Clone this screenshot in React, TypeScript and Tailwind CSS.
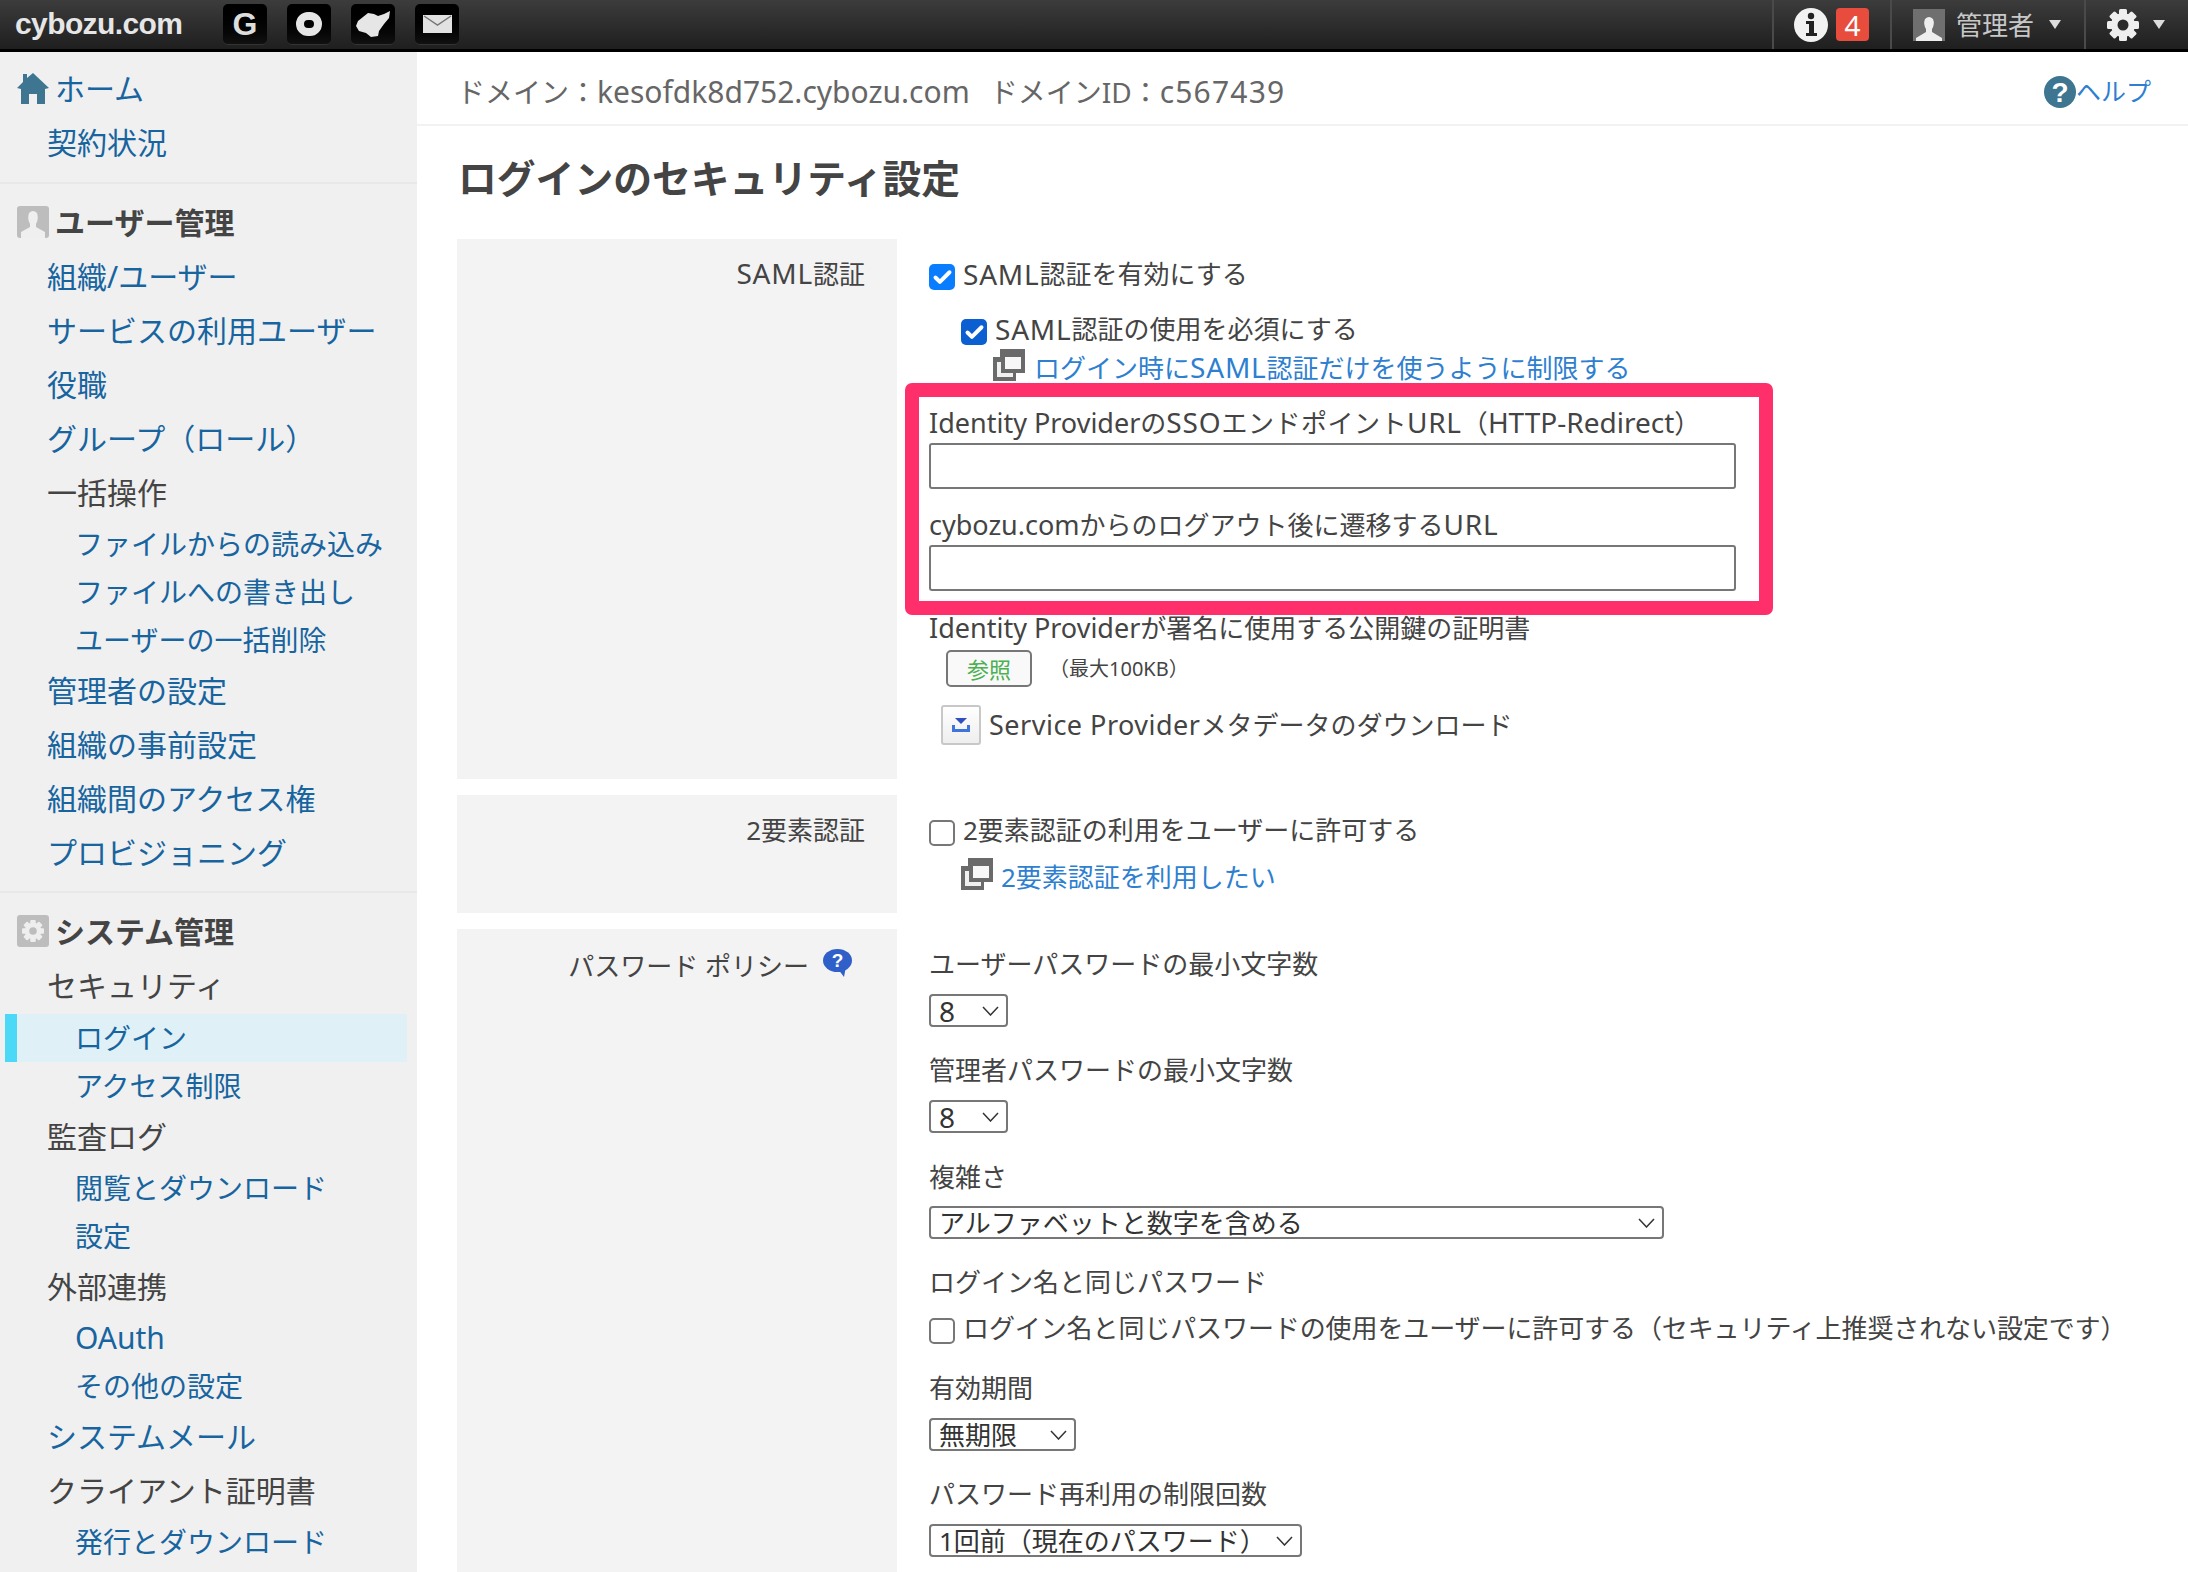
import { Check } from "lucide-react";

function AppIcon({ children }: { children: React.ReactNode }) {
  return (
    <div className="flex h-[41px] w-[44px] items-center justify-center rounded-[5px] border-b border-[#333] bg-gradient-to-b from-[#000] to-[#111]">
      {children}
    </div>
  );
}

function Caret() {
  return <div className="h-0 w-0 border-x-[6px] border-t-[9px] border-x-transparent border-t-[#ddd]" />;
}

// latin runs are a bit wider in the original than in Noto Sans
function Caps({ children }: { children: React.ReactNode }) {
  return <span className="text-[28px] leading-none tracking-[0.8px]">{children}</span>;
}

function Lat({ children }: { children: React.ReactNode }) {
  return <span className="text-[27px] leading-none">{children}</span>;
}

function Gear({ hole }: { hole: string }) {
  return (
    <>
      <g fill="#eee">
        <rect x="12" y="0" width="8" height="32" rx="1.5" />
        <rect x="12" y="0" width="8" height="32" rx="1.5" transform="rotate(45 16 16)" />
        <rect x="12" y="0" width="8" height="32" rx="1.5" transform="rotate(90 16 16)" />
        <rect x="12" y="0" width="8" height="32" rx="1.5" transform="rotate(135 16 16)" />
        <circle cx="16" cy="16" r="12" />
      </g>
      <circle cx="16" cy="16" r="5.5" fill={hole} />
    </>
  );
}

function Header() {
  return (
    <header className="flex h-[52px] shrink-0 items-stretch border-b-[3px] border-black bg-gradient-to-b from-[#3c3c3c] to-[#1f1f1f]">
      <div className="w-[223px] pl-[15px] font-['Liberation_Sans',sans-serif] text-[30px] leading-[48px] font-bold tracking-[-0.6px] text-[#e6e6e6]">
        cybozu.com
      </div>
      <div className="flex items-start gap-5 pt-1">
        <AppIcon>
          <span className="font-['Liberation_Sans',sans-serif] text-[32px] leading-none font-bold text-[#ddd]">G</span>
        </AppIcon>
        <AppIcon>
          <div className="h-[24px] w-[26px] rounded-full border-[8px] border-[#e6e6e6]" />
        </AppIcon>
        <AppIcon>
          <svg width="34" height="26" viewBox="0 0 34 26">
            <path
              d="M34 0 L28 3 L22 5 L18 3 L12 2 L7 6 L2 10 L0 15 L3 20 L10 22 L15 26 L22 25 L23 20 L28 13 L33 7 Z"
              fill="#e6e6e6"
            />
          </svg>
        </AppIcon>
        <AppIcon>
          <svg width="29" height="18" viewBox="0 0 29 18">
            <rect width="29" height="18" fill="#e2e2e2" />
            <path d="M1 1 L14.5 10 L28 1" fill="none" stroke="#777" strokeWidth="1.5" />
          </svg>
        </AppIcon>
      </div>
      <div className="ml-auto flex items-stretch">
        <div className="flex w-[118px] items-center border-l-[2px] border-[#4a4a4a] pl-[20px]">
          <svg width="34" height="34" viewBox="0 0 34 34">
            <circle cx="17" cy="17" r="17" fill="#f2f2f2" />
            <circle cx="17" cy="8" r="3.2" fill="#222" />
            <path d="M12 13 H20 V25 H23 V28 H12 V25 H15 V16 H12 Z" fill="#222" />
          </svg>
          <div className="ml-[8px] flex h-[33px] w-[33px] items-center justify-center rounded-[4px] bg-[#e74c3c] text-[28px] leading-none text-white">
            4
          </div>
        </div>
        <div className="flex w-[194px] items-center border-l-[2px] border-[#4a4a4a] pl-[21px]">
          <div className="flex h-[32px] w-[32px] items-end justify-center overflow-hidden bg-[#6f6f6f]">
            <svg width="26" height="26" viewBox="0 0 26 26">
              <path d="M9 4 Q13 0 17 4 Q19 9 16 14 L16 17 L26 23 L26 26 L0 26 L0 23 L10 17 L10 14 Q7 9 9 4 Z" fill="#eee" />
            </svg>
          </div>
          <span className="ml-[11px] text-[26px] leading-none text-[#c8c8c8]">管理者</span>
          <div className="ml-[15px]">
            <Caret />
          </div>
        </div>
        <div className="flex w-[104px] items-center border-l-[2px] border-[#4a4a4a] pl-[21px]">
          <svg width="32" height="32" viewBox="0 0 32 32">
            <Gear hole="#2a2a2a" />
          </svg>
          <div className="ml-[14px]">
            <Caret />
          </div>
        </div>
      </div>
    </header>
  );
}

function NavTop({ children, dark }: { children: React.ReactNode; dark?: boolean }) {
  return (
    <div className={`flex h-[54px] items-center pl-[47px] text-[30px] ${dark ? "text-[#444]" : "text-[#17649f]"}`}>
      {children}
    </div>
  );
}

function NavSub({ children }: { children: React.ReactNode }) {
  return <div className="flex h-[48px] items-center pt-[2px] pl-[75px] text-[28px] text-[#17649f]">{children}</div>;
}

function NavHead({ icon, children }: { icon: React.ReactNode; children: React.ReactNode }) {
  return (
    <div className="flex h-[54px] items-center pl-[17px] text-[30px] font-bold text-[#444]">
      <div className="mr-[6px] flex h-[32px] w-[32px] items-center justify-center overflow-hidden rounded-[3px] bg-[#bdbdbd]">
        {icon}
      </div>
      {children}
    </div>
  );
}

function Sidebar() {
  return (
    <aside className="w-[417px] shrink-0 bg-[#f0f0f0] pt-[9px]">
      <div className="flex h-[54px] items-center pl-[17px] text-[30px] text-[#17649f]">
        <svg className="mr-[6px]" width="32" height="31" viewBox="0 0 32 31">
          <path
            d="M16 0 L32 15 L28 16 L28 31 L20 31 L20 21 L12 21 L12 31 L4 31 L4 16 L0 15 L6 9 L6 1 L10 1 L10 5 Z"
            fill="#3e7590"
          />
        </svg>
        ホーム
      </div>
      <NavTop>契約状況</NavTop>
      <div className="mt-[13px] mb-[11px] h-[2px] bg-[#e8e8e8]" />

      <NavHead
        icon={
          <svg width="24" height="28" viewBox="0 0 24 28" className="mt-[4px]">
            <path d="M8 3 Q12 -1 16 3 Q18 9 15 14 L15 17 L24 22 L24 28 L0 28 L0 22 L9 17 L9 14 Q6 9 8 3 Z" fill="#efefef" />
          </svg>
        }
      >
        ユーザー管理
      </NavHead>
      <NavTop>組織/ユーザー</NavTop>
      <NavTop>サービスの利用ユーザー</NavTop>
      <NavTop>役職</NavTop>
      <NavTop>グループ（ロール）</NavTop>
      <NavTop dark>一括操作</NavTop>
      <NavSub>ファイルからの読み込み</NavSub>
      <NavSub>ファイルへの書き出し</NavSub>
      <NavSub>ユーザーの一括削除</NavSub>
      <NavTop>管理者の設定</NavTop>
      <NavTop>組織の事前設定</NavTop>
      <NavTop>組織間のアクセス権</NavTop>
      <NavTop>プロビジョニング</NavTop>
      <div className="mt-[12px] mb-[11px] h-[2px] bg-[#e8e8e8]" />

      <NavHead
        icon={
          <svg width="22" height="22" viewBox="0 0 32 32">
            <Gear hole="#bdbdbd" />
          </svg>
        }
      >
        システム管理
      </NavHead>
      <NavTop dark>セキュリティ</NavTop>
      <div className="mt-[2px] ml-[5px] flex h-[48px] w-[402px] items-center border-l-[12px] border-[#4cd9f7] bg-[#dff1f6] pl-[58px] text-[28px] text-[#17649f]">
        ログイン
      </div>
      <div className="flex h-[47px] items-center pl-[75px] text-[28px] text-[#17649f]">アクセス制限</div>
      <NavTop dark>監査ログ</NavTop>
      <NavSub>閲覧とダウンロード</NavSub>
      <NavSub>設定</NavSub>
      <NavTop dark>外部連携</NavTop>
      <NavSub>
        <span className="text-[30px] leading-none">OAuth</span>
      </NavSub>
      <NavSub>その他の設定</NavSub>
      <NavTop>システムメール</NavTop>
      <NavTop dark>クライアント証明書</NavTop>
      <NavSub>発行とダウンロード</NavSub>
    </aside>
  );
}

function Line({ children, className = "" }: { children: React.ReactNode; className?: string }) {
  return <div className={`flex h-[36px] items-center text-[26px] text-[#444] ${className}`}>{children}</div>;
}

function CheckBox({ checked, color = "bg-[#0a7dff]" }: { checked?: boolean; color?: string }) {
  if (!checked) {
    return <div className="mt-[6px] mr-[8px] h-[26px] w-[26px] shrink-0 rounded-[5px] border-[2px] border-[#777] bg-white" />;
  }
  return (
    <div className={`mt-[6px] mr-[8px] flex h-[26px] w-[26px] shrink-0 items-center justify-center rounded-[5px] ${color}`}>
      <Check size={21} strokeWidth={4.5} color="#fff" />
    </div>
  );
}

function LinkIcon() {
  return (
    <svg className="shrink-0" width="32" height="32" viewBox="0 0 32 32">
      <rect x="7" y="0" width="25" height="24" fill="#6a6a6a" />
      <rect x="0" y="8" width="23" height="24" fill="#6a6a6a" />
      <rect x="4" y="13" width="16" height="15" fill="#f0f0f0" />
      <rect x="8" y="6" width="24" height="18" fill="#6a6a6a" />
      <rect x="12" y="8" width="16" height="12" fill="#f7f7f7" />
    </svg>
  );
}

function Select({ value, className, textClass = "text-[26px]" }: { value: string; className: string; textClass?: string }) {
  return (
    <div className={`flex h-[33px] items-center justify-between rounded-[4px] border-[2px] border-[#777] bg-white pr-[7px] pl-[8px] leading-none text-[#333] ${textClass} ${className}`}>
      <span>{value}</span>
      <svg width="17" height="10" viewBox="0 0 17 10">
        <path d="M1 1 L8.5 9 L16 1" fill="none" stroke="#333" strokeWidth="1.5" />
      </svg>
    </div>
  );
}

function TextBox({ className = "" }: { className?: string }) {
  return <div className={`h-[46px] w-[807px] rounded-[3px] border-[2px] border-[#777] bg-white ${className}`} />;
}

function Content() {
  return (
    <main className="flex min-w-0 flex-1 flex-col overflow-hidden">
      <div className="flex h-[74px] shrink-0 items-center border-b-[2px] border-[#f2f2f2] pt-[7px] pr-[37px] pl-[40px] text-[#666]">
        <span className="text-[28px]">
          ドメイン：<span className="text-[30px] leading-none">kesofdk8d752.cybozu.com</span>
        </span>
        <span className="ml-[20px] text-[28px]">
          ドメインID：<span className="text-[30px] leading-none tracking-[1.2px]">c567439</span>
        </span>
        <div className="ml-auto flex items-center text-[25px] text-[#2f7fd0]">
          <svg width="32" height="32" viewBox="0 0 32 32">
            <circle cx="16" cy="16" r="16" fill="#3e7590" />
            <text x="16" y="26" textAnchor="middle" fontSize="28" fontWeight="700" fill="#fff" fontFamily="Liberation Sans">?</text>
          </svg>
          ヘルプ
        </div>
      </div>

      <h1 className="mt-[26px] ml-[41px] h-[52px] shrink-0 text-[38.8px] leading-[52px] font-bold text-[#444]">
        ログインのセキュリティ設定
      </h1>

      <div className="mt-[35px] flex h-[540px] shrink-0 pl-[40px]">
        <div className="w-[440px] shrink-0 bg-[#f3f3f3] pt-[17px] pr-[32px] text-right">
          <div className="h-[36px] text-[26px] leading-[36px] text-[#444]">
            <Caps>SAML</Caps>認証
          </div>
        </div>
        <div className="pt-[17px] pl-[32px]">
          <Line>
            <CheckBox checked />
            <Caps>SAML</Caps>認証を有効にする
          </Line>
          <Line className="mt-[19px] ml-[32px]">
            <CheckBox checked color="bg-[#0b5fd1]" />
            <Caps>SAML</Caps>認証の使用を必須にする
          </Line>
          <div className="mt-[2px] ml-[64px] flex h-[32px]">
            <LinkIcon />
            <span className="mt-[3px] ml-[9px] text-[26px] leading-[32px] text-[#2f7fd0]">
              ログイン時に<Caps>SAML</Caps>認証だけを使うように制限する
            </span>
          </div>
          <div className="relative mt-[24px]">
            <div className="absolute top-[-22px] left-[-24px] h-[232px] w-[868px] rounded-[7px] border-[14px] border-[#ff2f6b]" />
            <Line>
              <span>
                <Lat>Identity Provider</Lat>の<Caps>SSO</Caps>
                <span className="tracking-[0.5px]">エンドポイント</span>
                <Caps>URL</Caps>（<span className="text-[28px] leading-none">HTTP-Redirect</span>）
              </span>
            </Line>
            <TextBox className="mt-[2px]" />
            <Line className="mt-[18px]">
              <span>
                <Lat>cybozu.com</Lat>からのログアウト後に遷移する<Caps>URL</Caps>
              </span>
            </Line>
            <TextBox className="mt-[2px]" />
          </div>
          <Line className="mt-[19px]">
            <span>
              <Lat>Identity Provider</Lat>が署名に使用する公開鍵の証明書
            </span>
          </Line>
          <div className="mt-[4px] ml-[17px] flex items-center">
            <div className="flex h-[37px] w-[86px] items-center justify-center rounded-[5px] border-[2px] border-[#777] bg-[#f9f9f9] text-[22px] leading-none text-[#4caf50]">
              参照
            </div>
            <span className="ml-[17px] text-[20px] text-[#444]">（最大100KB）</span>
          </div>
          <div className="mt-[18px] ml-[12px] flex items-center">
            <div className="flex h-[40px] w-[40px] items-center justify-center rounded-[3px] border-[2px] border-[#c8c8c8] bg-gradient-to-b from-[#fff] to-[#eee]">
              <svg width="18" height="14" viewBox="0 0 18 14">
                <path d="M3 0 H15 L9 6 Z" fill="#2f4fc0" />
                <path d="M1.5 7 V12.5 H16.5 V7" fill="none" stroke="#3f74dc" strokeWidth="3" />
              </svg>
            </div>
            <span className="ml-[8px] text-[26px] text-[#444]">
              <span className="text-[27px] leading-none tracking-[0.5px]">Service Provider</span>メタデータのダウンロード
            </span>
          </div>
        </div>
      </div>

      <div className="mt-[16px] flex h-[118px] shrink-0 pl-[40px]">
        <div className="w-[440px] shrink-0 bg-[#f3f3f3] pt-[17px] pr-[32px] text-right">
          <div className="h-[36px] text-[26px] leading-[36px] text-[#444]">2要素認証</div>
        </div>
        <div className="pt-[17px] pl-[32px]">
          <Line>
            <CheckBox />
            2要素認証の利用をユーザーに許可する
          </Line>
          <div className="mt-[10px] ml-[32px] flex h-[32px]">
            <LinkIcon />
            <span className="mt-[3px] ml-[8px] text-[26px] leading-[32px] text-[#2f7fd0]">2要素認証を利用したい</span>
          </div>
        </div>
      </div>

      <div className="mt-[16px] flex flex-1 pl-[40px]">
        <div className="w-[440px] shrink-0 bg-[#f3f3f3] pt-[19px] pr-[45px]">
          <div className="flex h-[36px] items-center justify-end text-[26px] text-[#444]">
            パスワード ポリシー
            <svg className="mb-[6px] ml-[14px]" width="29" height="28" viewBox="0 0 29 28">
              <ellipse cx="14.5" cy="11.5" rx="14.5" ry="11.5" fill="#2f5fc8" />
              <path d="M15 20 L21 28 L23 17 Z" fill="#2f5fc8" />
              <text x="14.5" y="18" textAnchor="middle" fontSize="19" fontWeight="700" fill="#fff" fontFamily="Liberation Sans">?</text>
            </svg>
          </div>
        </div>
        <div className="pt-[17px] pl-[32px]">
          <Line>ユーザーパスワードの最小文字数</Line>
          <Select value="8" textClass="text-[28px]" className="mt-[12px] w-[79px]" />
          <Line className="mt-[25px]">管理者パスワードの最小文字数</Line>
          <Select value="8" textClass="text-[28px]" className="mt-[12px] w-[79px]" />
          <Line className="mt-[26px]">複雑さ</Line>
          <Select value="アルファベットと数字を含める" className="mt-[11px] w-[735px]" />
          <Line className="mt-[25px]">ログイン名と同じパスワード</Line>
          <Line className="mt-[10px]">
            <CheckBox />
            <span className="tracking-[-0.1px]">
              ログイン名と同じパスワードの使用をユーザーに許可する（セキュリティ上推奨されない設定です）
            </span>
          </Line>
          <Line className="mt-[24px]">有効期間</Line>
          <Select value="無期限" className="mt-[12px] w-[147px]" />
          <Line className="mt-[25px]">パスワード再利用の制限回数</Line>
          <Select value="1回前（現在のパスワード）" className="mt-[12px] w-[373px]" />
        </div>
      </div>
    </main>
  );
}

export default function App() {
  return (
    <div className="flex h-screen flex-col overflow-hidden bg-white font-['Noto_Sans','Noto_Sans_CJK_JP',sans-serif]">
      <Header />
      <div className="flex min-h-0 flex-1">
        <Sidebar />
        <Content />
      </div>
    </div>
  );
}
